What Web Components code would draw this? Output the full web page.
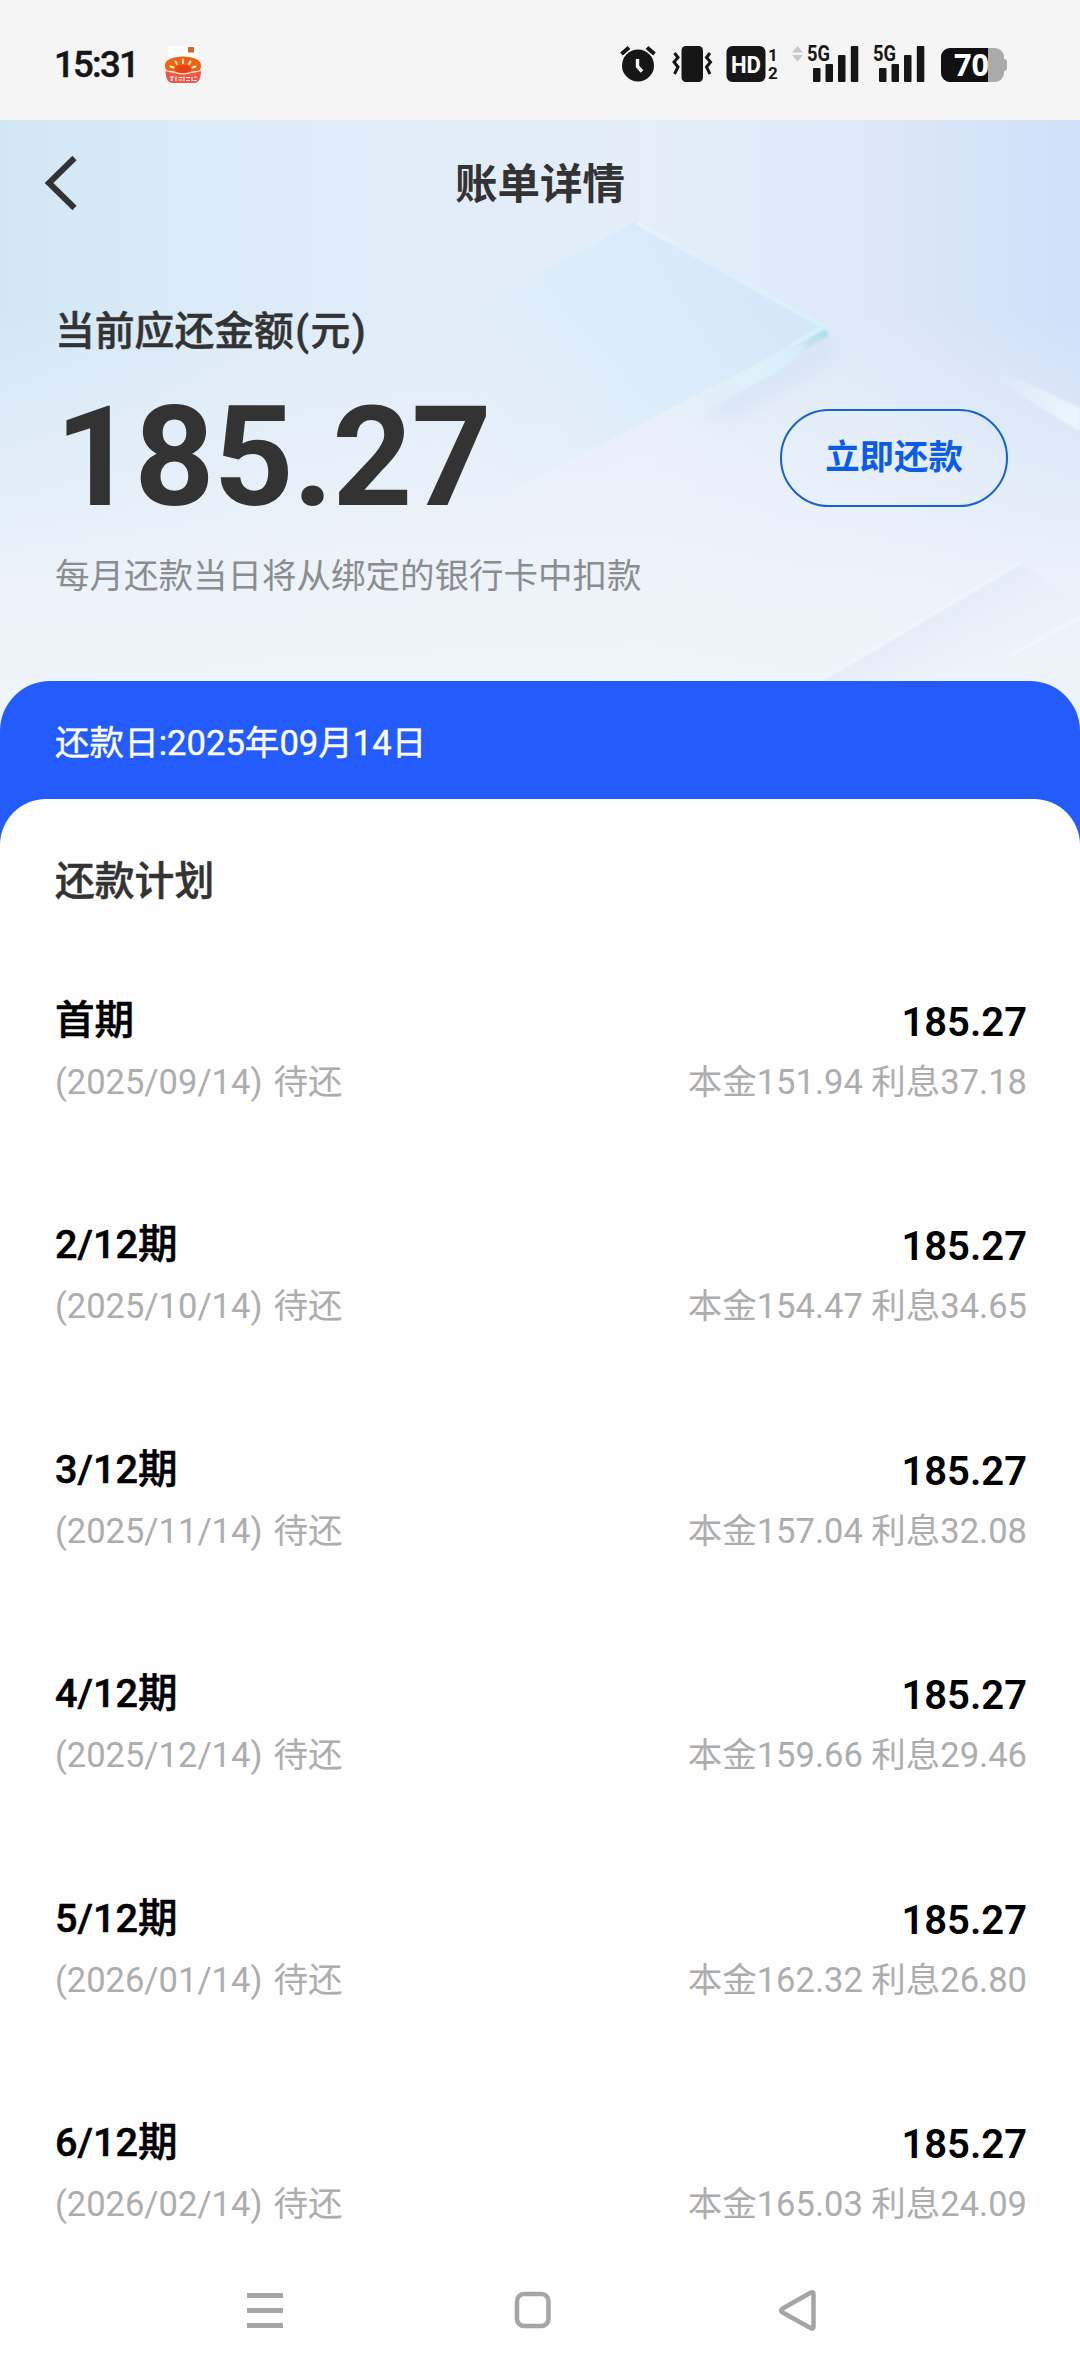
<!DOCTYPE html>
<html lang="zh-CN">
<head>
<meta charset="utf-8">
<title>账单详情</title>
<style>
html, body {
    margin: 0;
    padding: 0;
}
body {
    width: 1080px;
    height: 2376px;
    overflow: hidden;
    background: #fefefe;
    font-family: Roboto, "Noto Sans CJK SC", sans-serif;
    color: #333;
}
</style>
</head>
<body>
<bill-page></bill-page>

<script>
function define(name, html, setup) {
    const template = document.createElement("template");
    template.innerHTML = html;
    customElements.define(name, class extends HTMLElement {
        constructor() {
            super();
            this.attachShadow({mode: "open"});
        }
        connectedCallback() {
            if (this.shadowRoot.childNodes.length) return;
            this.shadowRoot.appendChild(template.content.cloneNode(true));
            if (setup) setup(this, this.shadowRoot);
        }
    });
}

// 5G label with four bars
define("signal-bars", `
<style>
:host { display: block; }
svg { display: block; overflow: visible; }
text { font: 700 22px Roboto, sans-serif; }
</style>
<svg width="54" height="40" viewBox="0 0 54 40" fill="#161616">
    <text x="1" y="18" textLength="23" lengthAdjust="spacingAndGlyphs">5G</text>
    <rect x="7" y="25" width="7.5" height="14" rx="1"/>
    <rect x="19.5" y="21" width="7.5" height="18" rx="1"/>
    <rect x="32" y="12" width="7.5" height="27" rx="1"/>
    <rect x="44.8" y="3" width="7.5" height="36" rx="1"/>
</svg>
`);

define("battery-level", `
<style>
:host { display: block; }
svg { display: block; overflow: visible; }
text { font: 700 31px "Open Sans", sans-serif; }
</style>
<svg width="68" height="40" viewBox="0 0 68 40">
    <defs><clipPath id="c"><rect x="1" y="5" width="63" height="34" rx="9"/></clipPath></defs>
    <rect x="59" y="16" width="8" height="12" rx="3" fill="#aaa"/>
    <g clip-path="url(#c)">
        <rect x="0" y="5" width="65" height="34" fill="#aaa"/>
        <rect x="0" y="5" width="48" height="34" fill="#101010"/>
    </g>
    <text x="14" y="33" fill="#fff" textLength="35" lengthAdjust="spacingAndGlyphs"></text>
</svg>
`, (host, root) => {
    root.querySelector("text").textContent = host.getAttribute("value");
});

define("status-bar", `
<style>
:host {
    display: flex;
    box-sizing: border-box;
    height: 120px;
    padding: 0 72px 0 54px;
    align-items: flex-start;
    background: #f5f5f5;
}
time {
    width: 109px;
    padding-top: 43px;
    font: 500 36.5px/44px Roboto, sans-serif;
    letter-spacing: -1.7px;
    color: #161616;
    -webkit-text-stroke: .5px #161616;
}
svg { display: block; overflow: visible; }
.app { margin-top: 45px; }
.right {
    display: flex;
    margin: 43px 0 0 auto;
}
.right text { font: 700 16px Roboto, sans-serif; }
</style>
<time>15:31</time>
<svg class="app" width="40" height="40" viewBox="0 0 40 40">
    <path d="M5 1h31v14H5z" fill="#fefefe"/>
    <rect x="25" y="2" width="6" height="5.500" fill="#d4672f"/>
    <path d="M2 20.500C2 15 9 11.500 20 11.500S38 15 38 20.500c0 3.500-2 6.500-5 7.500H7c-3-1-5-4-5-7.500z" fill="#ee6412"/>
    <ellipse cx="20" cy="24.500" rx="8" ry="4.500" fill="#e5421a"/>
    <path d="M20 14.500v3.500M12.500 16.500l1.500 2.500M27.500 16.500L26 19M7.500 21.500l3 1M32.500 21.500l-3 1" stroke="#ffe9c9" stroke-width="1.900" stroke-linecap="round"/>
    <path d="M2.500 25.500c4 1.500 7 1 11 2.300q6.500 2 13 0c4-1.300 7.500-.8 11.500-2.300 0 8-2 12.500-7 12.500H10c-5 0-7.500-4.500-7.500-12.500z" fill="#e8594c"/>
    <path d="M2.500 25.500c4 1.500 7 1 11 2.300q6.500 2 13 0c4-1.300 7.500-.8 11.500-2.300" fill="none" stroke="#fbe3d0" stroke-width="1.300"/>
    <path d="M7 32h4M7 35h3M9 31v5M13 31.500v4.500M15.500 32.500h4M15.500 35h4M21 31.500v4.500M23 32.500h4M23 35.500h4M29 32v3.500h5M31 32h3" stroke="#fff" stroke-opacity=".85" stroke-width="1.200" fill="none"/>
</svg>
<div class="right">
    <svg width="52" height="40" viewBox="0 0 52 40">
        <circle cx="19" cy="22.500" r="16" fill="#161616"/>
        <path d="M2.500 11L10 4.500M35.500 11L28 4.500" stroke="#161616" stroke-width="4"/>
        <path d="M18.500 16v7.500l4.500 5" stroke="#f5f5f5" stroke-width="3.400" fill="none"/>
    </svg>
    <svg width="54" height="40" viewBox="0 0 54 40">
        <rect x="10.500" y="3" width="21.500" height="36" rx="4.500" fill="#161616"/>
        <path d="M3.500 10L7 14.500 3 19l4 5-3.500 7M39 10l-3.500 4.500L39.500 19l-4 5 3.500 7" stroke="#161616" stroke-width="3" fill="none"/>
    </svg>
    <svg width="66" height="40" viewBox="0 0 66 40">
        <rect x="1.500" y="3" width="39" height="36" rx="6" fill="#161616"/>
        <text x="6" y="30" fill="#fff" style="font-size:24px" textLength="30" lengthAdjust="spacingAndGlyphs">HD</text>
        <text x="43" y="17.500" fill="#161616" style="font-size:17px">1</text>
        <text x="43" y="36" fill="#161616" style="font-size:17px">2</text>
    </svg>
    <svg width="15" height="40" viewBox="0 0 15 40" fill="#c9c9c9">
        <path d="M1 9.500l5.500-6.500L12 9.500zM1 12h11l-5.500 6.500z"/>
    </svg>
    <signal-bars></signal-bars>
    <signal-bars style="margin-left:12px"></signal-bars>
    <battery-level style="margin-left:14px" value="70"></battery-level>
</div>
`);

define("title-bar", `
<style>
:host {
    display: grid;
    grid-template-columns: 100px 1fr 100px;
    align-items: center;
    height: 126px;
}
svg { display: block; margin-left: 42px; }
h1 {
    margin: 4px 0 0;
    font-size: 42.5px;
    line-height: 60px;
    font-weight: 700;
    text-align: center;
}
</style>
<svg width="38" height="56" viewBox="0 0 38 56"><path d="M32.500 3L7 28l25.500 25" fill="none" stroke="#333" stroke-width="6"/></svg>
<h1><slot></slot></h1>
`);

define("pill-button", `
<style>
:host { display: block; }
button {
    display: block;
    width: 228px;
    height: 98px;
    padding: 0 0 8px;
    border: 2px solid #1464cc;
    border-radius: 49px;
    background: none;
    font: inherit;
    font-size: 34.4px;
    font-weight: 700;
    color: #0b5de8;
}
</style>
<button><slot></slot></button>
`);

// glass panes drawn behind the header
define("glass-backdrop", `
<style>
:host { display: block; }
svg { display: block; }
</style>
<svg width="1080" height="640" viewBox="0 120 1080 640">
    <defs>
        <linearGradient id="base" x1="0" y1="0" x2="1" y2="0">
            <stop offset="0" stop-color="#d2e7f6"/>
            <stop offset=".25" stop-color="#deecf9"/>
            <stop offset=".6" stop-color="#e5eefa"/>
            <stop offset=".82" stop-color="#dce8f8"/>
            <stop offset="1" stop-color="#cfe0f8"/>
        </linearGradient>
        <linearGradient id="fade" x1="0" y1="0" x2="0" y2="1">
            <stop offset=".3" stop-color="#f1f4fa" stop-opacity="0"/>
            <stop offset=".72" stop-color="#eff4fa" stop-opacity=".88"/>
            <stop offset="1" stop-color="#f0f5f9"/>
        </linearGradient>
        <linearGradient id="pane" gradientUnits="userSpaceOnUse" x1="780" y1="260" x2="430" y2="480">
            <stop offset="0" stop-color="#d4e8fb"/>
            <stop offset=".5" stop-color="#dbedfa" stop-opacity=".8"/>
            <stop offset="1" stop-color="#e4effa" stop-opacity="0"/>
        </linearGradient>
        <linearGradient id="rim" gradientUnits="userSpaceOnUse" x1="810" y1="345" x2="680" y2="425">
            <stop offset="0" stop-color="#d5eef9"/>
            <stop offset=".4" stop-color="#def3fb"/>
            <stop offset="1" stop-color="#e4f1fb" stop-opacity="0"/>
        </linearGradient>
        <linearGradient id="edge" gradientUnits="userSpaceOnUse" x1="637" y1="221" x2="825" y2="328">
            <stop offset="0" stop-color="#eef7fd"/>
            <stop offset=".4" stop-color="#dff0fb"/>
            <stop offset="1" stop-color="#d6f5fc"/>
        </linearGradient>
        <linearGradient id="tip" gradientUnits="userSpaceOnUse" x1="828" y1="328" x2="770" y2="362">
            <stop offset="0" stop-color="#aeddf0"/>
            <stop offset="1" stop-color="#c5e6f5" stop-opacity="0"/>
        </linearGradient>
        <linearGradient id="ray" gradientUnits="userSpaceOnUse" x1="995" y1="370" x2="1070" y2="410">
            <stop offset="0" stop-color="#ecf4fd" stop-opacity="0"/>
            <stop offset="1" stop-color="#ebf5fc"/>
        </linearGradient>
        <linearGradient id="low" gradientUnits="userSpaceOnUse" x1="920" y1="620" x2="965" y2="695">
            <stop offset="0" stop-color="#e3ebf7"/>
            <stop offset="1" stop-color="#ecf1f9" stop-opacity="0"/>
        </linearGradient>
        <filter id="b1" x="-20%" y="-20%" width="140%" height="140%"><feGaussianBlur stdDeviation="1.2"/></filter>
        <filter id="b2" x="-40%" y="-40%" width="180%" height="180%"><feGaussianBlur stdDeviation="10"/></filter>
    </defs>
    <rect y="120" width="1080" height="640" fill="url(#base)"/>
    <rect y="120" width="1080" height="640" fill="url(#fade)"/>
    <path d="M832 330L700 410l30 10 110-65z" fill="#c3dbf3" opacity=".4" filter="url(#b2)"/>
    <path d="M637 221L825 328 440 528 250 430z" fill="url(#pane)"/>
    <path d="M825 328l4 8-40 22-4-6z" fill="url(#tip)" filter="url(#b1)"/>
    <path d="M806 344l-20 4-110 62-4 12 18-2 100-56z" fill="url(#rim)" filter="url(#b1)"/>
    <path d="M637 223L824 327l-34 19" fill="none" stroke="url(#edge)" stroke-width="3.500" filter="url(#b1)"/>
    <path d="M1000 370l80 38v24l-80-50z" fill="url(#ray)" filter="url(#b1)"/>
    <path d="M1020 563L815 684h265V600z" fill="url(#low)" opacity=".8"/>
    <path d="M1020 563L815 684M1085 614l-75 42" stroke="#f3f8fd" stroke-width="2.500" filter="url(#b1)"/>
</svg>
`);

define("bill-header", `
<style>
:host {
    display: grid;
    height: 620px;
}
glass-backdrop, .content { grid-area: 1 / 1; }
.content {
    position: relative;
    display: flex;
    flex-direction: column;
}
.due {
    display: flex;
    align-items: center;
    justify-content: space-between;
    margin-top: 13px;
    padding: 0 72px 0 55px;
}
.label {
    margin-top: 56px;
    padding-left: 55px;
    font-size: 39.8px;
    line-height: 60px;
    font-weight: 500;
    -webkit-text-stroke: .5px #333;
}
.label i {
    font-style: normal;
    margin: 0 1.500px;
}
.amount {
    font-size: 140px;
    line-height: 164px;
    font-weight: 700;
    letter-spacing: -1.1px;
}
.note {
    margin-top: 12px;
    padding-left: 55px;
    font-size: 34.5px;
    line-height: 50px;
    color: #8b8c8e;
}
pill-button { margin-top: 2px; }
</style>
<glass-backdrop></glass-backdrop>
<div class="content">
    <title-bar>账单详情</title-bar>
    <div class="label">当前应还金额<i>(</i>元<i>)</i></div>
    <div class="due">
        <div class="amount">185.27</div>
        <pill-button>立即还款</pill-button>
    </div>
    <div class="note">每月还款当日将从绑定的银行卡中扣款</div>
</div>
`);

define("plan-row", `
<style>
:host {
    display: grid;
    grid-template-columns: auto auto;
    grid-template-rows: 61px 60px;
    justify-content: space-between;
    align-content: start;
    box-sizing: border-box;
    height: 224.4px;
    padding: 0 53px 0 55px;
    line-height: 60px;
}
b {
    font-size: 39.6px;
    font-weight: 500;
    color: #000;
    -webkit-text-stroke: .5px #000;
}
.money {
    margin-top: 2px;
    font-size: 40px;
    font-weight: 600;
    text-align: right;
    -webkit-text-stroke: 0;
}
span {
    font-size: 34.5px;
    color: #adadad;
    white-space: pre;
}
.date { word-spacing: 2.5px; }
.split { text-align: right; }
</style>
<b class="term"></b><b class="money"></b>
<span class="date"></span><span class="split"></span>
`, (host, root) => {
    const put = (sel, text) => { root.querySelector(sel).textContent = text; };
    put(".term", host.getAttribute("term"));
    put(".money", host.getAttribute("money"));
    put(".date", "(" + host.getAttribute("date") + ") 待还");
    put(".split", "本金" + host.getAttribute("principal") + " 利息" + host.getAttribute("interest"));
});

define("repay-sheet", `
<style>
:host {
    display: block;
    position: relative;
    margin-top: -59px;
    background: linear-gradient(#245bfc 240px, #fefefe 240px);
    border-radius: 50px 50px 0 0;
}
.day {
    height: 118px;
    padding-left: 55px;
    font-size: 34.6px;
    line-height: 124px;
    color: #fff;
    -webkit-text-stroke: .4px #fff;
}
.card {
    box-sizing: border-box;
    height: 1445px;
    overflow: hidden;
    background: #fefefe;
    border-radius: 46px 46px 0 0;
}
h2 {
    margin: 53px 0 79px;
    padding-left: 55px;
    font-size: 39.8px;
    line-height: 60px;
    font-weight: 500;
    -webkit-text-stroke: .5px #333;
}
</style>
<div class="day"><slot name="day"></slot></div>
<div class="card">
    <h2>还款计划</h2>
    <slot></slot>
</div>
`);

define("nav-keys", `
<style>
:host {
    display: flex;
    height: 132px;
    padding: 0 263px 0 246px;
    align-items: center;
}
svg { display: block; fill: none; stroke: #a5a5a5; }
.home { margin: 0 auto 0 230px; }
</style>
<svg width="38" height="44" viewBox="0 0 38 44" stroke-width="5"><path d="M1 7.500h36M1 22.500h36M1 37.500h36"/></svg>
<svg class="home" width="38" height="44" viewBox="0 0 38 44" stroke-width="4.500"><rect x="3" y="6" width="31.500" height="32" rx="7"/></svg>
<svg width="40" height="44" viewBox="0 0 40 44" stroke-width="4.500" stroke-linejoin="round"><path d="M36.500 6.200v32.500q0 3-3 1.400L5.200 24.200q-2.200-1.700 0-3.400L33.500 4.800q3-1.600 3 1.400z"/></svg>
`);

const plan = [
    ["首期", "2025/09/14", "151.94", "37.18"],
    ["2/12期", "2025/10/14", "154.47", "34.65"],
    ["3/12期", "2025/11/14", "157.04", "32.08"],
    ["4/12期", "2025/12/14", "159.66", "29.46"],
    ["5/12期", "2026/01/14", "162.32", "26.80"],
    ["6/12期", "2026/02/14", "165.03", "24.09"]
];

define("bill-page", `
<style>
:host { display: block; }
</style>
<status-bar></status-bar>
<bill-header></bill-header>
<repay-sheet><span slot="day">还款日:2025年09月14日</span></repay-sheet>
<nav-keys></nav-keys>
`, (host, root) => {
    const sheet = root.querySelector("repay-sheet");
    for (const [term, date, principal, interest] of plan) {
        const row = document.createElement("plan-row");
        row.setAttribute("term", term);
        row.setAttribute("money", "185.27");
        row.setAttribute("date", date);
        row.setAttribute("principal", principal);
        row.setAttribute("interest", interest);
        sheet.appendChild(row);
    }
});
</script>
</body>
</html>
